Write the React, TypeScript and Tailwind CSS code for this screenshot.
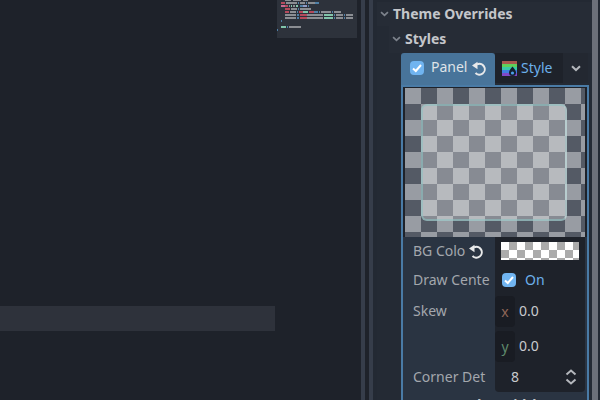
const gray = '#8b8e93';
const red = '#b54a5c';
const pink = '#c76b93';
const blue = '#4f7fa6';
const teal = '#82c4aa';
const slate = '#8f9ac4';

// x, y, width, colour
const minimapBars: [number, number, number, string][] = [
  [8, 0, 6, gray], [16, 0, 8, gray], [26, 0, 5, gray],
  [4, 2, 4, red], [9, 2, 11, gray], [21, 2, 1, blue], [23, 2, 5, gray], [29, 2, 1, blue], [31, 2, 7, gray], [38, 2, 4, blue],
  [4, 5, 4, pink], [8, 5, 3, red], [12, 5, 1, gray], [14, 5, 1, teal], [16, 5, 2, gray], [19, 5, 2, teal], [23, 5, 3, blue], [26, 5, 4, slate], [31, 5, 1, blue],
  [8, 8, 5, red], [14, 8, 6, gray], [21, 8, 1, blue], [23, 8, 11, gray],
  [8, 11, 4, red], [13, 11, 6, gray], [20, 11, 1, blue], [22, 11, 4, red], [26, 11, 5, teal], [32, 11, 5, red], [37, 11, 4, blue], [42, 11, 1, blue], [44, 11, 10, gray], [55, 11, 1, blue], [57, 11, 7, gray],
  [8, 14, 11, gray], [20, 14, 2, blue], [23, 14, 7, red], [30, 14, 16, gray], [47, 14, 9, teal], [57, 14, 1, blue], [59, 14, 7, gray], [67, 14, 1, blue], [69, 14, 7, gray],
  [8, 17, 11, gray], [20, 17, 2, blue], [23, 17, 7, red], [30, 17, 16, gray], [47, 17, 9, teal], [57, 17, 1, blue], [59, 17, 7, gray], [67, 17, 1, blue], [69, 17, 7, gray],
  [4, 20, 1, blue],
  [4, 26, 5, teal], [10, 26, 1, blue], [12, 26, 12, gray],
  [0, 29, 1, blue],
];

function Chevron({ className }: { className: string }) {
  return (
    <svg viewBox="0 0 10 7" className={className} fill="none" stroke="currentColor" strokeWidth="2">
      <path d="M1 1.2 5 5 9 1.2" />
    </svg>
  );
}

function ResetIcon() {
  return (
    <svg viewBox="0 0 16 16" className="w-4 h-4 shrink-0 text-[#e8e9ea]" fill="none">
      <path d="M6 4.4A5.4 5.4 0 1 1 4.5 13" stroke="currentColor" strokeWidth="2" />
      <path d="M1 5.5 6.5 1.8v7.4z" fill="currentColor" />
    </svg>
  );
}

function CheckBox() {
  return (
    <div className="w-[14px] h-[14px] rounded-sm bg-[#70b4f0] flex items-center justify-center shrink-0">
      <svg viewBox="0 0 14 14" className="w-[14px] h-[14px]" fill="none" stroke="#ffffff" strokeWidth="2">
        <path d="M3 7.5 5.8 10 11 4" />
      </svg>
    </div>
  );
}

function StyleIcon() {
  return (
    <svg viewBox="0 0 15 15" className="w-[15px] h-[15px] shrink-0">
      <rect x="0" y="0" width="15" height="3" fill="#a8584e" />
      <rect x="0" y="3" width="15" height="3" fill="#5fd05a" />
      <rect x="0" y="6" width="15" height="3" fill="#38c8a8" />
      <rect x="0" y="9" width="15" height="3" fill="#3f7ee0" />
      <rect x="0" y="12" width="15" height="3" fill="#8048c8" />
      <path d="M10.5 5.5c2 2.6 3.5 4.2 3.5 6a3.5 3.5 0 0 1-7 0c0-1.8 1.5-3.4 3.5-6z" fill="#14202e" />
      <circle cx="10.5" cy="12" r="1.6" fill="#4b9fe8" />
    </svg>
  );
}

export default function App() {
  return (
    <div className="w-[600px] h-[400px] overflow-hidden flex bg-[#1e222a] font-['Noto_Sans',sans-serif] text-sm">
      {/* script editor */}
      <div className="w-[361px] h-full flex shrink-0">
        <div className="w-[277px] pt-[306px]">
          <div className="w-[275px] h-[25px] bg-[#2e323b]" />
        </div>
        <div className="w-[80px] h-[38px] bg-[#2d323b]">
          <svg viewBox="0 0 80 38" className="w-[80px] h-[38px]">
            {minimapBars.map(([x, y, w, c], i) => (
              <rect key={i} x={x} y={y} width={w} height={y === 0 ? 1 : 2} fill={c} />
            ))}
          </svg>
        </div>
      </div>

      {/* splitters */}
      <div className="w-[4px] h-full bg-[#363d4a] shrink-0" />
      <div className="w-[4px] h-full shrink-0" />
      <div className="w-[4px] h-full bg-[#363d4a] shrink-0" />

      {/* inspector */}
      <div className="flex-1 h-full flex bg-[#232933] pl-1">
        <div className="w-[215px] pt-[2px] shrink-0">
          <div className="h-[24px] flex items-center gap-[4px] pl-[3px] bg-[#262c36] font-bold text-[#c4c6ca]">
            <Chevron className="w-[9px] h-[6px] text-[#7d838c]" />
            <span>Theme Overrides</span>
          </div>
          <div className="pl-3 bg-[#242a34]">
            <div className="h-[27px] flex items-center gap-[4px] pl-[3px] pb-[2px] bg-[#262c36] font-bold text-[#c4c6ca]">
              <Chevron className="w-[9px] h-[6px] text-[#7d838c]" />
              <span>Styles</span>
            </div>
            <div className="pl-3">
              {/* property header */}
              <div className="flex h-[32px] w-[187px]">
                <div className="w-[94px] flex items-center bg-[#48749a] rounded-t-[3px] pl-[9px] pb-[2px] text-[#dfe3e8]">
                  <CheckBox />
                  <span className="ml-[7px] -mt-[2px]">Panel</span>
                  <div className="ml-[4px]"><ResetIcon /></div>
                </div>
                <div className="w-[68px] h-[30px] flex items-center bg-[#1e222a] pl-[7px] text-[#6cb0ea]">
                  <StyleIcon />
                  <span className="ml-[4px]">Style</span>
                </div>
                <div className="w-[25px] h-[30px] flex items-center justify-center pl-[1px] bg-[#232831]">
                  <Chevron className="w-[10px] h-[7px] text-[#b4b7bc]" />
                </div>
              </div>

              {/* sub-resource box */}
              <div className="w-[188px] border-x-2 border-t-2 border-[#4a7ba6] bg-[#1e222a]">
                <div className="px-[2px] pt-[1px] w-[184px]">
                  <div className="w-[180px] h-[149px] pl-4 pt-4 bg-[conic-gradient(#545a65_25%,#989ca3_0_50%,#545a65_0_75%,#989ca3_0)] bg-[length:32px_32px]">
                    <div className="w-[146px] h-[117px] bg-white/30 border-2 border-[#8fc0c0]/60 border-r-[#b8d4d4]/70 rounded-md" />
                  </div>
                </div>

                <div className="flex h-[27px] bg-[#2a3442]">
                  <div className="w-[92px] flex items-center pl-[10px] gap-[3px] text-[#a3a7ad]">
                    <span>BG Colo</span>
                    <ResetIcon />
                  </div>
                  <div className="w-[90px] bg-[#1e222a] pl-[6px] pt-[5px]">
                    <div className="w-[78px] h-[18px] bg-[conic-gradient(#ababab_25%,#ffffff_0_50%,#ababab_0_75%,#ffffff_0)] bg-[length:16px_16px]" />
                  </div>
                  <div className="w-[2px]" />
                </div>

                <div className="flex h-[31px] bg-[#2a3442]">
                  <div className="w-[92px] flex items-center pl-[10px] text-[#a3a7ad] overflow-hidden whitespace-nowrap">
                    Draw Cente
                  </div>
                  <div className="w-[90px] bg-[#1e222a] flex items-center pl-[7px] gap-[9px] text-[#6cb0ea]">
                    <CheckBox />
                    <span>On</span>
                  </div>
                </div>

                <div className="flex h-[67px] bg-[#2a3442]">
                  <div className="w-[92px] pl-[10px] pt-[6px] text-[#a3a7ad]">Skew</div>
                  <div className="w-[90px] bg-[#1e222a] flex flex-col">
                    <div className="h-[32px] flex">
                      <div className="w-[20px] mt-[1px] rounded-sm bg-[#191c23] flex items-center justify-center text-[#8f6658]">x</div>
                      <span className="ml-[4px] self-center text-[#c8cacd]">0.0</span>
                    </div>
                    <div className="h-[35px] flex">
                      <div className="w-[20px] mt-[4px] rounded-sm bg-[#191c23] flex items-center justify-center text-[#5f8a6c]">y</div>
                      <span className="ml-[4px] mt-[2px] self-center text-[#c8cacd]">0.0</span>
                    </div>
                  </div>
                </div>

                <div className="flex h-[30px] bg-[#2a3442]">
                  <div className="w-[92px] flex items-center pl-[10px] text-[#a3a7ad] overflow-hidden whitespace-nowrap">
                    Corner Det
                  </div>
                  <div className="w-[90px] bg-[#1e222a] rounded-b-sm flex items-center pl-[16px] pr-[8px] justify-between text-[#c8cacd]">
                    <span>8</span>
                    <svg viewBox="0 0 12 16" className="w-[12px] h-[16px] text-[#b4b7bc]" fill="none" stroke="currentColor" strokeWidth="2">
                      <path d="M1.5 5.5 6 1.5l4.5 4M1.5 10.5 6 14.5l4.5-4" />
                    </svg>
                  </div>
                </div>

                <div className="h-[20px] bg-[#2a3442] pt-[3px] text-center font-bold text-[#c4c6ca] w-[184px] leading-[20px]">
                  Border Width
                </div>
              </div>
            </div>
          </div>
        </div>
        <div className="w-[6px] h-full ml-0 bg-[#6c7079] shrink-0" />
      </div>
    </div>
  );
}
